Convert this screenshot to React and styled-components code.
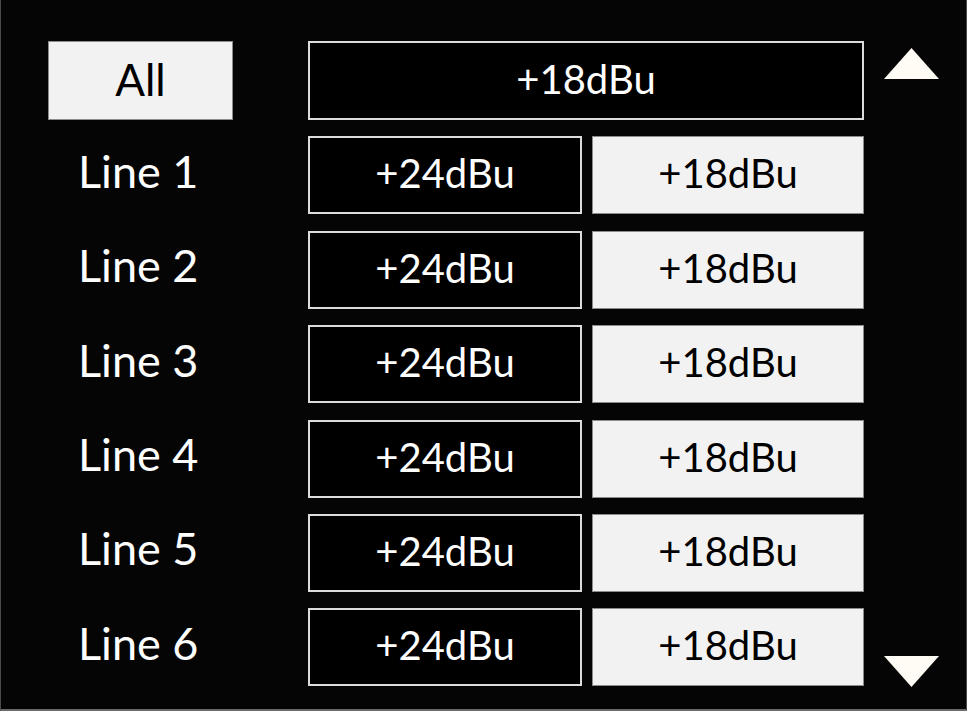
import React, {useState} from 'react';
import styled, {createGlobalStyle} from 'styled-components';

const GlobalStyle = createGlobalStyle`
  html, body {
    margin: 0;
    padding: 0;
    background: #050505;
  }
  body {
    font-family: Lato, "Open Sans", "Liberation Sans", sans-serif;
  }
`;

const Screen = styled.div`
  box-sizing: border-box;
  width: 967px;
  height: 711px;
  background: #050505;
  border-left: 1px solid #4a4a4a;
  border-right: 1px solid #4a4a4a;
  border-bottom: 2px solid #6a6a6a;
  padding: 41px 0 0 47px;
  display: flex;
  gap: 20px;
`;

const Grid = styled.div`
  display: grid;
  grid-template-columns: 185px 556px;
  grid-template-rows: 79px repeat(6, 78px);
  column-gap: 75px;
  row-gap: 16.4px;
  align-content: start;
`;

const Label = styled.div`
  color: #fff;
  font-size: 45px;
  line-height: 1;
  padding-left: 30px;
  padding-bottom: 8px;
  display: flex;
  align-items: center;
`;

const Option = styled.button`
  box-sizing: border-box;
  flex: 1;
  height: 100%;
  margin: 0;
  padding: 0 0 4px;
  font-family: inherit;
  font-size: ${(props) => (props.big ? '44px' : '40px')};
  cursor: pointer;
  background: ${(props) => (props.selected ? '#f2f2f2' : '#000')};
  color: ${(props) => (props.selected ? '#000' : '#fff')};
  border: ${(props) => (props.selected ? '1px solid #8c8c8c' : '2px solid #dcdcdc')};
`;

const Pair = styled.div`
  display: flex;
  gap: 10px;
`;

const Arrows = styled.div`
  box-sizing: border-box;
  width: 55px;
  height: 646px;
  padding-top: 7px;
  display: flex;
  flex-direction: column;
  justify-content: space-between;

  svg {
    display: block;
  }
`;

const Arrow = ({down}) => (
  <svg width="55" height="31" viewBox="0 0 55 31">
    <polygon
      points={down ? '0,0 55,0 27.5,31' : '0,31 55,31 27.5,0'}
      fill="#fffcf5"
    />
  </svg>
);

const lines = [1, 2, 3, 4, 5, 6];

const App = () => {
  const [levels, setLevels] = useState(lines.map(() => 18));

  const pick = (i, value) => {
    setLevels(levels.map((v, j) => (j === i ? value : v)));
  };

  return (
    <Screen>
      <GlobalStyle />
      <Grid>
        <Pair>
          <Option selected big>All</Option>
        </Pair>
        <Pair>
          <Option onClick={() => setLevels(lines.map(() => 18))}>+18dBu</Option>
        </Pair>
        {lines.map((n, i) => (
          <React.Fragment key={n}>
            <Label>Line {n}</Label>
            <Pair>
              <Option selected={levels[i] === 24} onClick={() => pick(i, 24)}>+24dBu</Option>
              <Option selected={levels[i] === 18} onClick={() => pick(i, 18)}>+18dBu</Option>
            </Pair>
          </React.Fragment>
        ))}
      </Grid>
      <Arrows>
        <Arrow />
        <Arrow down />
      </Arrows>
    </Screen>
  );
};

export default App;
